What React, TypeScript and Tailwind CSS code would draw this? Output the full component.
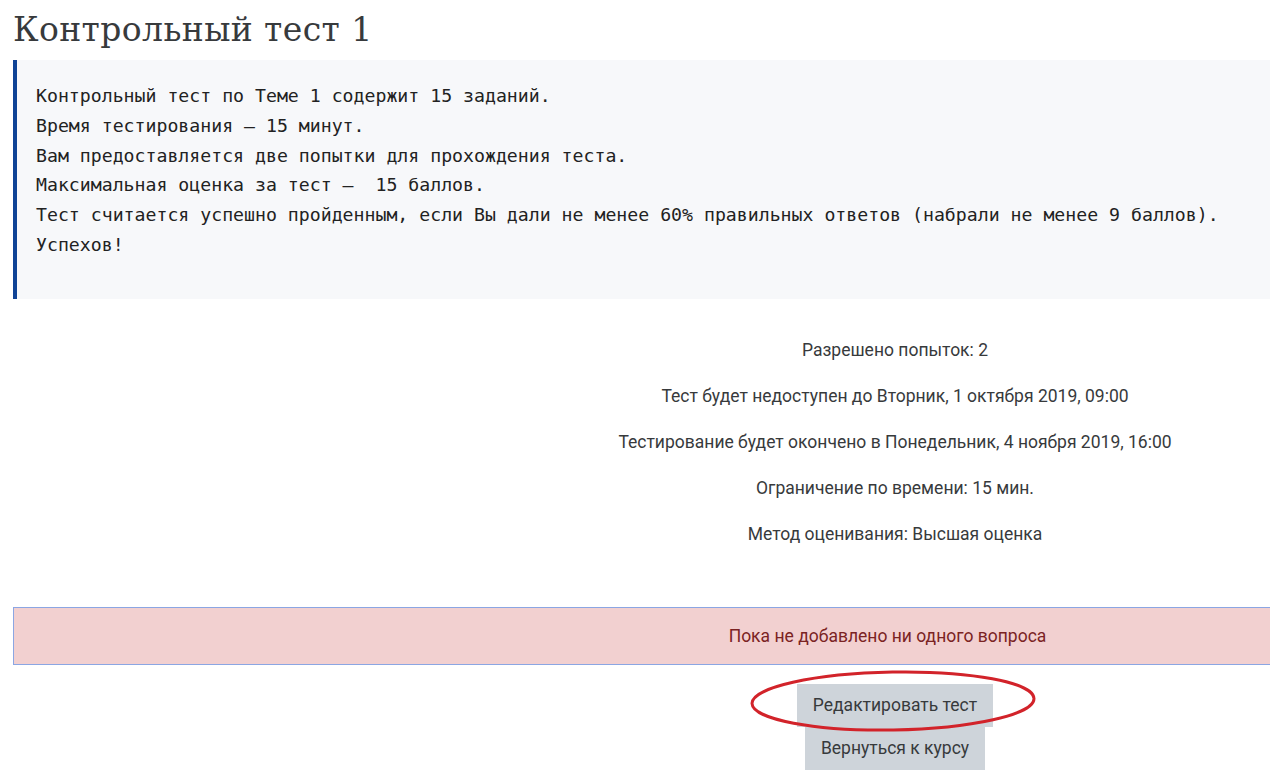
const intro = [
  'Контрольный тест по Теме 1 содержит 15 заданий.',
  'Время тестирования — 15 минут.',
  'Вам предоставляется две попытки для прохождения теста.',
  'Максимальная оценка за тест —  15 баллов.',
  'Тест считается успешно пройденным, если Вы дали не менее 60% правильных ответов (набрали не менее 9 баллов).',
  'Успехов!',
];

const info = [
  'Разрешено попыток: 2',
  'Тест будет недоступен до Вторник, 1 октября 2019, 09:00',
  'Тестирование будет окончено в Понедельник, 4 ноября 2019, 16:00',
  'Ограничение по времени: 15 мин.',
  'Метод оценивания: Высшая оценка',
];

export default function App() {
  return (
    <div className="w-[1270px] h-[773px] overflow-hidden bg-white">
      <div className="ml-[13px] w-[1764px]">
        <h1 className="pt-[10px] h-[60px] text-[33px] leading-[40px] text-[#373a3c] font-['DejaVu_Serif',serif] tracking-[0.4px]">
          Контрольный тест 1
        </h1>

        <div className="border-l-4 border-[#0f4396] bg-[#f7f8fa] h-[239px] pl-[19px] pt-[21px]">
          {intro.map((line, i) => (
            <p
              key={i}
              className="whitespace-pre text-[18.2px] leading-[29.8px] text-[#222] font-['DejaVu_Sans_Mono',monospace]"
            >
              {line}
            </p>
          ))}
        </div>

        <div className="flex flex-col items-center pt-[39px] font-['Roboto',sans-serif] text-[#373a3c] text-[17.5px]">
          {info.map((line, i) => (
            <p key={i} className="h-[46px] leading-[24px]">
              {line}
            </p>
          ))}
        </div>

        <div className="mt-[39px] h-[58px] border border-[#8ba6e3] bg-[#f2d0d0] flex items-center justify-center pr-[15px] font-['Roboto',sans-serif] text-[17.5px] text-[#7b2323]">
          Пока не добавлено ни одного вопроса
        </div>

        <div className="relative flex flex-col items-center pt-[19px] font-['Roboto',sans-serif] text-[17.5px] text-[#373a3c]">
          <button className="h-[43px] px-[16px] bg-[#ced4da]">Редактировать тест</button>
          <button className="h-[43px] px-[16px] bg-[#ced4da]">Вернуться к курсу</button>
          <svg
            className="absolute left-[737px] top-[5px]"
            width="288"
            height="64"
            viewBox="0 0 288 64"
          >
            <ellipse cx="143" cy="31" rx="141" ry="29" fill="none" stroke="#d2232a" strokeWidth="3" transform="rotate(-1 143 31)" />
          </svg>
        </div>
      </div>
    </div>
  );
}
